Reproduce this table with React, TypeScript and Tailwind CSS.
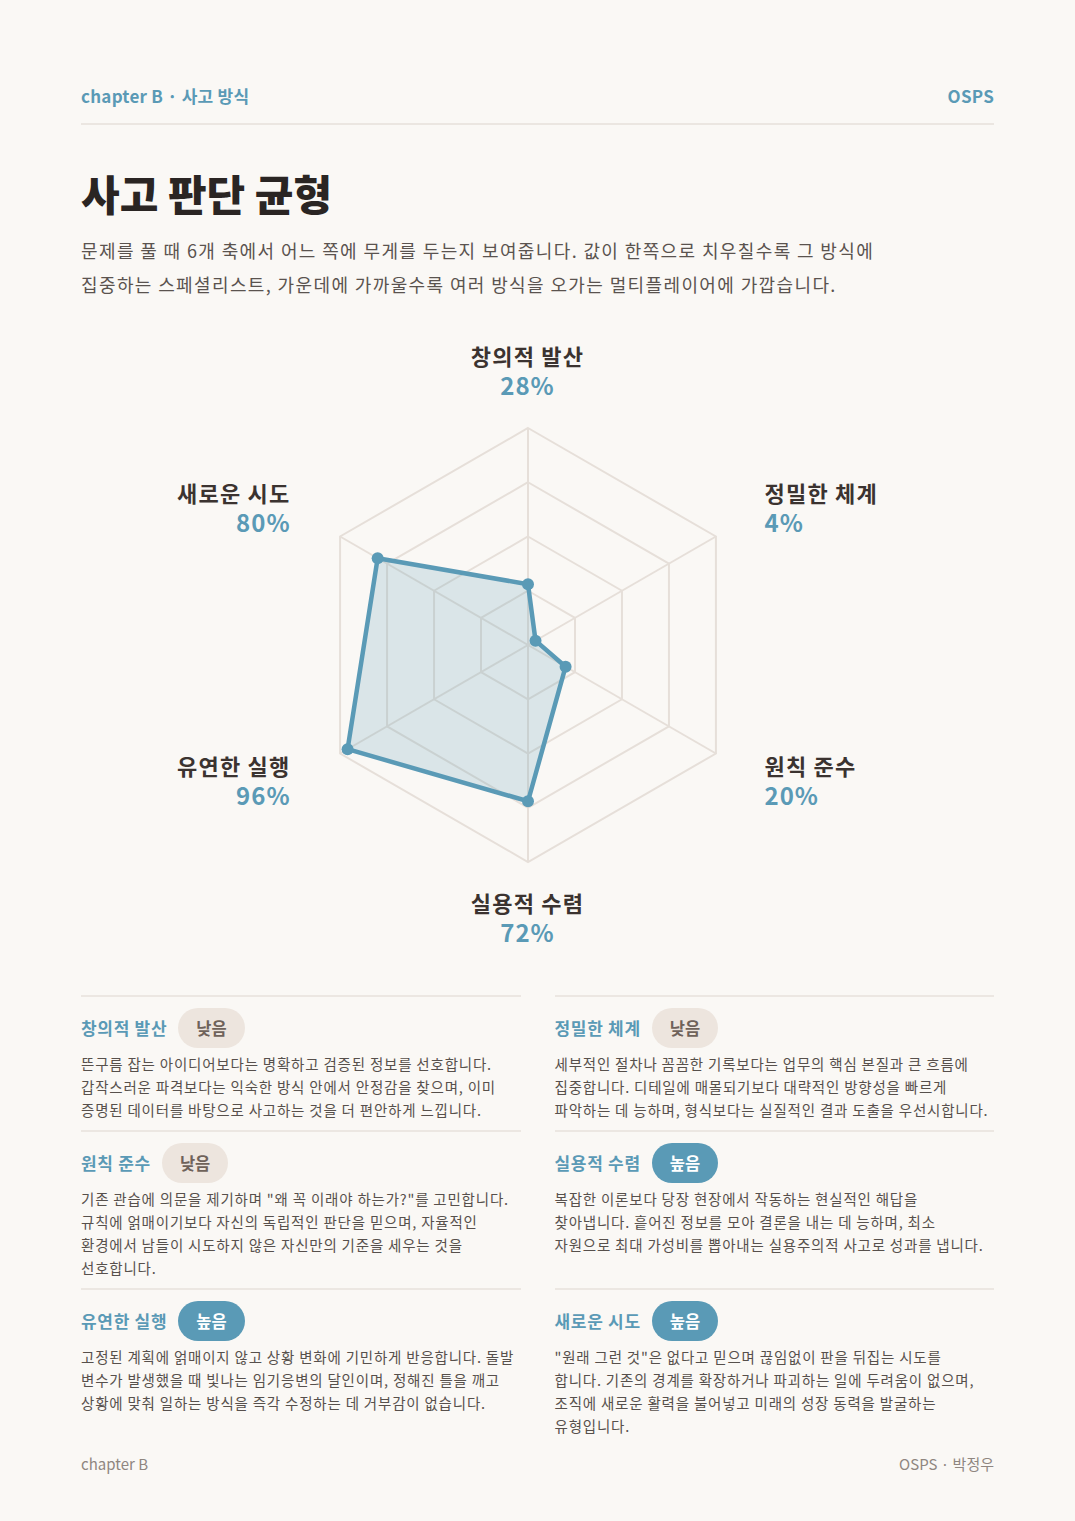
import React from 'react';

const FONT = '"Noto Sans CJK KR", "Noto Sans", sans-serif';
const BLUE = '#5a9ab6';

interface IAxis {
  name: string;
  value: number;
  angle: number;
  pos: string;
}

// 라벨 위치: 차트 캔버스 안의 좌표
const axes: IAxis[] = [
  { name: '창의적 발산', value: 28, angle: -90, pos: 'left-[446px] top-[20px] -translate-x-1/2 text-center' },
  { name: '정밀한 체계', value: 4, angle: -30, pos: 'left-[683px] top-[157px] text-left' },
  { name: '원칙 준수', value: 20, angle: 30, pos: 'left-[683px] top-[430px] text-left' },
  { name: '실용적 수렴', value: 72, angle: 90, pos: 'left-[446px] top-[567px] -translate-x-1/2 text-center' },
  { name: '유연한 실행', value: 96, angle: 150, pos: 'right-[703px] top-[430px] text-right' },
  { name: '새로운 시도', value: 80, angle: 210, pos: 'right-[703px] top-[157px] text-right' },
];

const CX = 446;
const CY = 325;
const R = 217;

const pt = (angle: number, r: number) => {
  const a = (angle * Math.PI) / 180;
  return [CX + r * Math.cos(a), CY + r * Math.sin(a)];
};

interface ICard {
  title: string;
  level: '낮음' | '높음';
  lines: string[];
}

const cards: ICard[] = [
  {
    title: '창의적 발산',
    level: '낮음',
    lines: [
      '뜬구름 잡는 아이디어보다는 명확하고 검증된 정보를 선호합니다.',
      '갑작스러운 파격보다는 익숙한 방식 안에서 안정감을 찾으며, 이미',
      '증명된 데이터를 바탕으로 사고하는 것을 더 편안하게 느낍니다.',
    ],
  },
  {
    title: '정밀한 체계',
    level: '낮음',
    lines: [
      '세부적인 절차나 꼼꼼한 기록보다는 업무의 핵심 본질과 큰 흐름에',
      '집중합니다. 디테일에 매몰되기보다 대략적인 방향성을 빠르게',
      '파악하는 데 능하며, 형식보다는 실질적인 결과 도출을 우선시합니다.',
    ],
  },
  {
    title: '원칙 준수',
    level: '낮음',
    lines: [
      '기존 관습에 의문을 제기하며 "왜 꼭 이래야 하는가?"를 고민합니다.',
      '규칙에 얽매이기보다 자신의 독립적인 판단을 믿으며, 자율적인',
      '환경에서 남들이 시도하지 않은 자신만의 기준을 세우는 것을',
      '선호합니다.',
    ],
  },
  {
    title: '실용적 수렴',
    level: '높음',
    lines: [
      '복잡한 이론보다 당장 현장에서 작동하는 현실적인 해답을',
      '찾아냅니다. 흩어진 정보를 모아 결론을 내는 데 능하며, 최소',
      '자원으로 최대 가성비를 뽑아내는 실용주의적 사고로 성과를 냅니다.',
    ],
  },
  {
    title: '유연한 실행',
    level: '높음',
    lines: [
      '고정된 계획에 얽매이지 않고 상황 변화에 기민하게 반응합니다. 돌발',
      '변수가 발생했을 때 빛나는 임기응변의 달인이며, 정해진 틀을 깨고',
      '상황에 맞춰 일하는 방식을 즉각 수정하는 데 거부감이 없습니다.',
    ],
  },
  {
    title: '새로운 시도',
    level: '높음',
    lines: [
      '"원래 그런 것"은 없다고 믿으며 끊임없이 판을 뒤집는 시도를',
      '합니다. 기존의 경계를 확장하거나 파괴하는 일에 두려움이 없으며,',
      '조직에 새로운 활력을 불어넣고 미래의 성장 동력을 발굴하는',
      '유형입니다.',
    ],
  },
];

const Radar: React.FC = () => {
  const rings = [0.25, 0.5, 0.75, 1];
  const data = axes.map((a) => pt(a.angle, (R * a.value) / 100));
  return (
    <div className="relative w-[912px] h-[660px]">
      <svg width="912" height="660" viewBox="0 0 912 660" className="absolute inset-0">
        {rings.map((k) => (
          <polygon
            key={k}
            points={axes.map((a) => pt(a.angle, R * k).join(',')).join(' ')}
            fill="none"
            stroke="#e6dfd9"
            strokeWidth="2"
          />
        ))}
        {axes.map((a) => {
          const [x, y] = pt(a.angle, R);
          return <line key={a.name} x1={CX} y1={CY} x2={x} y2={y} stroke="#e6dfd9" strokeWidth="2" />;
        })}
        <polygon
          points={data.map((p) => p.join(',')).join(' ')}
          fill={BLUE}
          fillOpacity="0.2"
          stroke={BLUE}
          strokeWidth="4.5"
          strokeLinejoin="round"
        />
        {data.map(([x, y], i) => (
          <circle key={i} cx={x} cy={y} r="6" fill={BLUE} />
        ))}
      </svg>
      {axes.map((a) => (
        <div key={a.name} className={`absolute whitespace-nowrap font-bold ${a.pos}`}>
          <div className="text-[22px] leading-[30px] tracking-[1.2px] text-[#3b3330]">{a.name}</div>
          <div className="text-[24px] leading-[30px] tracking-[1px] text-[#5a9ab6]">{a.value}%</div>
        </div>
      ))}
    </div>
  );
};

const Card: React.FC<{ card: ICard }> = ({ card }) => {
  const high = card.level === '높음';
  return (
    <div className="border-t-2 border-[#ece7e2] pt-[11px] pb-[9px]">
      <div className="flex items-center gap-[11px]">
        <h3 className="text-[17px] font-bold tracking-[0.7px] text-[#5a9ab6]">{card.title}</h3>
        <span
          className={
            high
              ? 'h-[40px] px-[18px] rounded-full flex items-center text-[16.5px] font-bold bg-[#5a9ab6] text-white'
              : 'h-[40px] px-[18px] rounded-full flex items-center text-[16.5px] font-bold bg-[#ede5de] text-[#6f625a]'
          }
        >
          {card.level}
        </span>
      </div>
      <p className="mt-[4px] text-[14.5px] leading-[23px] tracking-[0.8px] text-[#57504c] whitespace-nowrap">
        {card.lines.map((l, i) => (
          <React.Fragment key={i}>
            {l}
            {i < card.lines.length - 1 && <br />}
          </React.Fragment>
        ))}
      </p>
    </div>
  );
};

const App: React.FC = () => {
  return (
    <div className="min-h-[1521px] w-full bg-[#faf8f5] px-[81px]" style={{ fontFamily: FONT }}>
      <header className="pt-[84px] pb-[15px] flex justify-between items-center border-b-2 border-[#ebe6e1]">
        <span className="text-[17px] leading-[24px] font-bold tracking-[0.25px] text-[#5a9ab6]">chapter B · 사고 방식</span>
        <span className="text-[17px] leading-[24px] font-bold tracking-[0.25px] text-[#5a9ab6]">OSPS</span>
      </header>

      <h1 className="mt-[41px] text-[42px] leading-[53px] font-black text-[#2a2523]">사고 판단 균형</h1>
      <p className="mt-[14px] text-[18px] leading-[34px] tracking-[1.38px] text-[#5a534f] whitespace-nowrap">
        문제를 풀 때 6개 축에서 어느 쪽에 무게를 두는지 보여줍니다. 값이 한쪽으로 치우칠수록 그 방식에
        <br />
        집중하는 스페셜리스트, 가운데에 가까울수록 여러 방식을 오가는 멀티플레이어에 가깝습니다.
      </p>

      <div className="mt-[19px] flex justify-center">
        <Radar />
      </div>

      <div className="mt-[15px] grid grid-cols-2 gap-x-[34px]">
        {cards.map((c) => (
          <Card key={c.title} card={c} />
        ))}
      </div>

      <footer className="mt-[7px] flex justify-between text-[15px] text-[#8f8680]">
        <span>chapter B</span>
        <span>OSPS · 박정우</span>
      </footer>
    </div>
  );
};

export default App;
